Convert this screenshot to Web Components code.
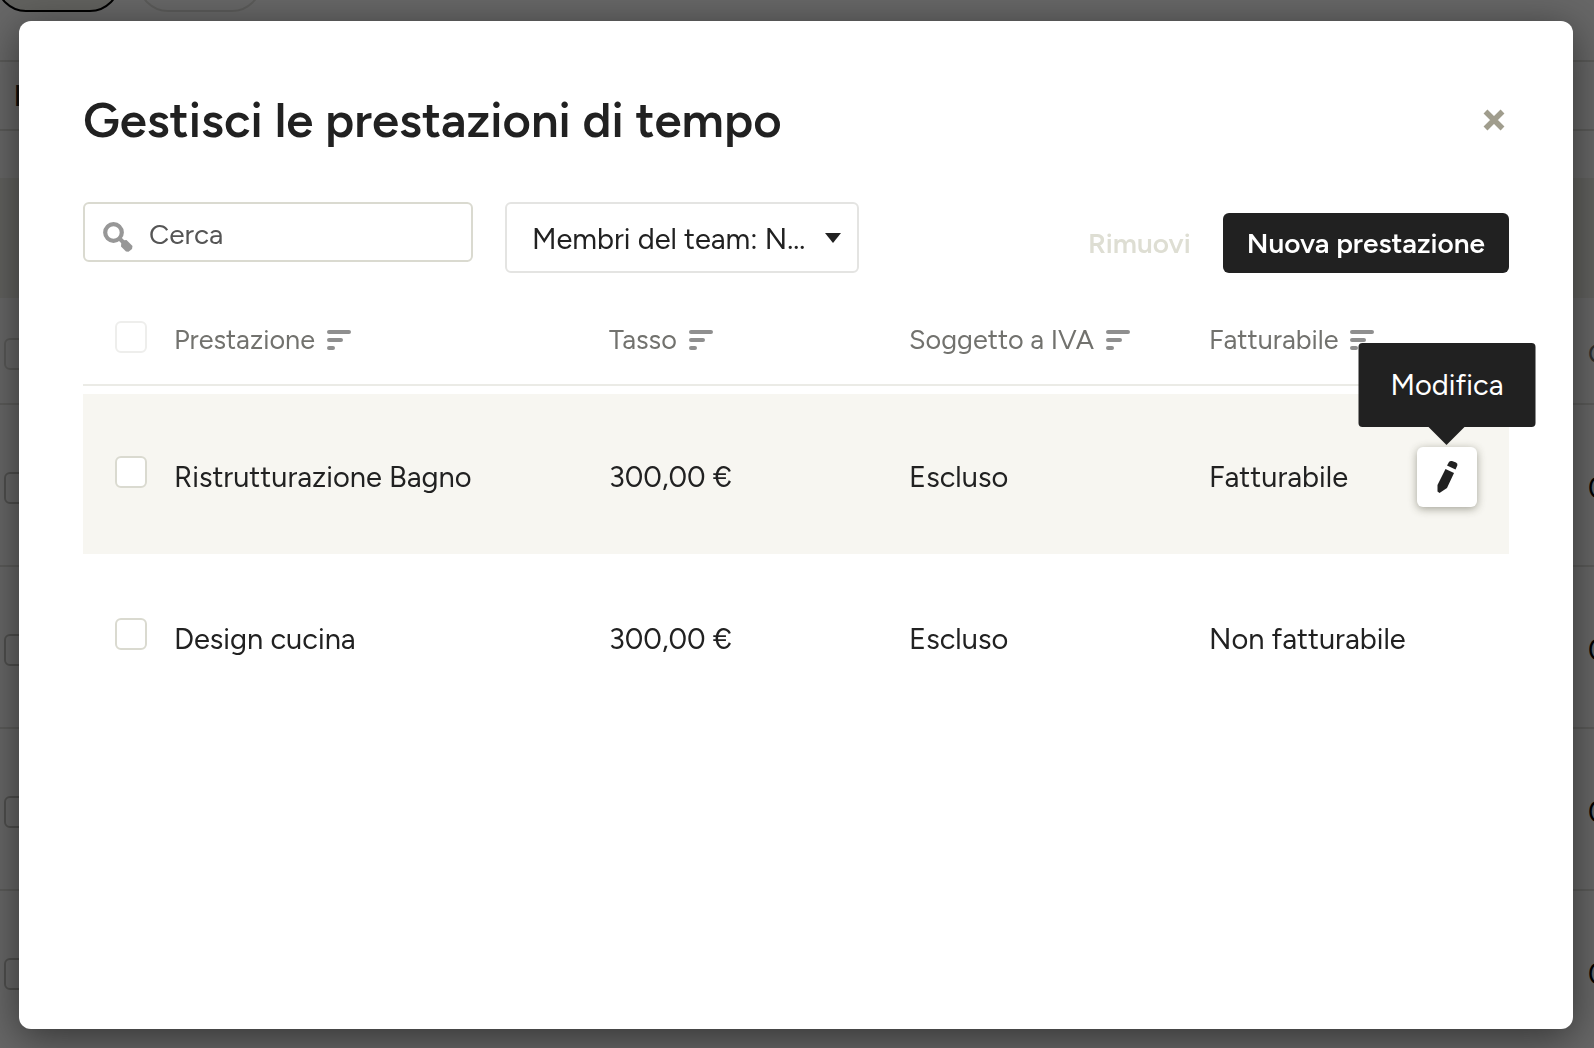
<!DOCTYPE html>
<html lang="it">
<head>
<meta charset="utf-8">
<meta name="viewport" content="width=device-width, initial-scale=1">
<title>Gestisci le prestazioni di tempo</title>
<style>
  body {
    margin: 0;
    height: 100vh;
    overflow: hidden;
    font-family: Figtree, Lato, "Open Sans", sans-serif;
    font-size: 29px;
    line-height: 36px;
    color: #212121;
    --ink: #212121;
    --muted: #72726e;
    --border: #dadad0;
    --border-light: #ebebe6;
    --sand: #f7f6f1;
    --control-size: 28px;
  }
</style>
</head>
<body>

<page-behind></page-behind>

<modal-dialog heading="Gestisci le prestazioni di tempo">
  <search-field slot="filters" label="Cerca"></search-field>
  <filter-select slot="filters" label="Membri del team: N..."></filter-select>
  <action-button slot="actions" variant="text" disabled>Rimuovi</action-button>
  <action-button slot="actions">Nuova prestazione</action-button>
  <service-table></service-table>
</modal-dialog>

<script>
// Page that stays visible around the edges of the modal
class PageBehind extends HTMLElement {
  constructor() {
    super();
    this.attachShadow({ mode: 'open' });
    const row = `
      <div class="row">
        <input type="checkbox" aria-label="Seleziona riga" tabindex="-1">
        <span>0</span>
      </div>`;

    this.shadowRoot.innerHTML = `
      <style>
        :host {
          display: block;
          height: 100%;
          overflow: hidden;
          background: #fff;
        }
        .pills {
          display: flex;
          gap: 18px;
          height: 12px;
          margin-left: -4px;
          align-items: flex-end;
          overflow: hidden;
        }
        .pill {
          flex: none;
          box-sizing: border-box;
          width: 124px;
          height: 60px;
          border: 2px solid #e2e2de;
          border-radius: 30px;
        }
        .pill.active {
          border-color: #000;
          background: #f1f1ea;
        }
        .bar {
          box-sizing: border-box;
          height: 71px;
          margin-top: 48px;
          padding: 16px 14px;
          border: solid #e0e0dc;
          border-width: 2px 0;
          font-weight: 700;
        }
        .band {
          height: 120px;
          margin-top: 47px;
          background: #f1f1ea;
        }
        .row {
          box-sizing: border-box;
          display: flex;
          align-items: center;
          justify-content: space-between;
          height: 162px;
          padding: 6px 0 0 4px;
          border-bottom: 2px solid #e2e2de;
          color: #000;
        }
        .row.head {
          height: 107px;
          font-size: 27px;
          color: #72726e;
        }
        .row span {
          flex: none;
          width: 6px;
        }
        input {
          appearance: none;
          box-sizing: border-box;
          width: 32px;
          height: 32px;
          margin: 0;
          border: 2px solid #c4c4c0;
          border-radius: 6px;
        }
        .head input {
          border-color: #dadad6;
        }
      </style>
      <div class="pills">
        <div class="pill active"></div>
        <div class="pill"></div>
      </div>
      <div class="bar">I</div>
      <div class="band"></div>
      <div class="row head">
        <input type="checkbox" aria-label="Seleziona tutto" tabindex="-1">
        <span>O</span>
      </div>
      ${row.repeat(4)}
    `;
  }
}

// Overlay with the white dialog box
class ModalDialog extends HTMLElement {
  constructor() {
    super();
    this.attachShadow({ mode: 'open' });
    this.shadowRoot.innerHTML = `
      <style>
        :host {
          position: fixed;
          inset: 0;
          display: flex;
          box-sizing: border-box;
          padding: 21px 21px 19px 19px;
          background: rgba(0, 0, 0, .6);
        }
        .dialog {
          flex: 1;
          min-width: 0;
          box-sizing: border-box;
          padding: 64px;
          border-radius: 12px;
          background: #fff;
          box-shadow: 0 8px 40px rgba(0, 0, 0, .5);
        }
        header {
          display: flex;
          align-items: center;
          justify-content: space-between;
          height: 69px;
          margin-bottom: 48px;
        }
        h1 {
          margin: 0;
          font-size: 49px;
          line-height: 64px;
          font-weight: 600;
        }
        .close {
          display: flex;
          padding: 4px;
          border: 0;
          background: none;
          color: #a09d8d;
        }
        .toolbar {
          display: flex;
          justify-content: space-between;
          margin-bottom: 16px;
        }
        .filters {
          display: flex;
          align-items: flex-start;
          gap: 32px;
        }
        .actions {
          display: flex;
          align-items: flex-end;
          gap: 8px;
        }
      </style>
      <section class="dialog" role="dialog" aria-modal="true" aria-labelledby="title">
        <header>
          <h1 id="title"></h1>
          <button class="close" type="button" aria-label="Chiudi">
            <svg width="22" height="22" viewBox="0 0 22 22" stroke="currentColor" stroke-width="5.500">
              <path d="M2.500 2.500l17 17M19.500 2.500l-17 17"/>
            </svg>
          </button>
        </header>
        <div class="toolbar">
          <div class="filters"><slot name="filters"></slot></div>
          <div class="actions"><slot name="actions"></slot></div>
        </div>
        <slot></slot>
      </section>
    `;
  }

  connectedCallback() {
    this.shadowRoot.querySelector('h1').textContent = this.getAttribute('heading');
  }
}

class SearchField extends HTMLElement {
  constructor() {
    super();
    this.attachShadow({ mode: 'open' });
    this.shadowRoot.innerHTML = `
      <style>
        :host {
          display: block;
          width: 390px;
        }
        label {
          box-sizing: border-box;
          display: flex;
          align-items: center;
          gap: 16px;
          height: 60px;
          padding: 10px 18px 0;
          border: 2px solid var(--border);
          border-radius: 6px;
        }
        svg {
          flex: none;
          color: #979797;
        }
        input {
          flex: 1;
          min-width: 0;
          height: 40px;
          margin-bottom: 6px;
          padding: 0;
          border: 0;
          outline: 0;
          background: none;
          font: inherit;
          font-size: var(--control-size);
          color: inherit;
        }
        input::placeholder {
          color: #555;
          opacity: 1;
        }
      </style>
      <label>
        <svg width="30" height="30" viewBox="0 0 30 30" aria-hidden="true">
          <circle cx="10.500" cy="10.500" r="8.300" fill="none" stroke="currentColor" stroke-width="4.200"/>
          <path d="M16 16l4 4" stroke="currentColor" stroke-width="4"/>
          <path d="M18.500 18.500l5-.5 6 6-.5 3-3.500 2.800-2.500-.3-5-5z" fill="currentColor"/>
        </svg>
        <input type="search">
      </label>
    `;
  }

  connectedCallback() {
    const input = this.shadowRoot.querySelector('input');
    input.placeholder = this.getAttribute('label');
    input.setAttribute('aria-label', this.getAttribute('label'));
  }
}

class FilterSelect extends HTMLElement {
  constructor() {
    super();
    this.attachShadow({ mode: 'open' });
    this.shadowRoot.innerHTML = `
      <style>
        :host {
          display: grid;
          align-items: center;
          width: 354px;
        }
        select, svg {
          grid-area: 1 / 1;
        }
        select {
          appearance: none;
          box-sizing: border-box;
          width: 100%;
          height: 71px;
          padding: 2px 40px 0 25px;
          border: 2px solid #e4e4e2;
          border-radius: 6px;
          background: #fff;
          font: inherit;
          color: inherit;
        }
        svg {
          justify-self: end;
          margin-right: 18px;
          pointer-events: none;
        }
      </style>
      <select aria-label="Membri del team"><option></option></select>
      <svg width="16" height="10" viewBox="0 0 16 10" fill="#212121" aria-hidden="true">
        <path d="M0 0h16L8 10z"/>
      </svg>
    `;
  }

  connectedCallback() {
    this.shadowRoot.querySelector('option').textContent = this.getAttribute('label');
  }
}

class ActionButton extends HTMLElement {
  constructor() {
    super();
    this.attachShadow({ mode: 'open' });
    this.shadowRoot.innerHTML = `
      <style>
        :host {
          display: block;
        }
        button {
          height: 60px;
          padding: 0 24px;
          border: 0;
          border-radius: 6px;
          background: var(--ink);
          color: #fff;
          font: inherit;
          font-size: var(--control-size);
          font-weight: 600;
        }
        :host([variant="text"]) button {
          background: none;
        }
        button:disabled {
          color: #deded3;
        }
      </style>
      <button type="button"><slot></slot></button>
    `;
  }

  connectedCallback() {
    this.shadowRoot.querySelector('button').disabled = this.hasAttribute('disabled');
  }
}

// Pencil button with its tooltip open above it
class EditAction extends HTMLElement {
  constructor() {
    super();
    this.attachShadow({ mode: 'open' });
    this.shadowRoot.innerHTML = `
      <style>
        :host {
          position: relative;
          display: block;
        }
        button {
          display: flex;
          align-items: center;
          justify-content: center;
          width: 60px;
          height: 60px;
          padding: 0;
          border: 0;
          border-radius: 6px;
          background: #fff;
          color: var(--ink);
          box-shadow: 0 2px 8px rgba(60, 60, 40, .45);
        }
        .tooltip {
          position: absolute;
          bottom: calc(100% + 20px);
          left: 50%;
          transform: translateX(-50%);
          box-sizing: border-box;
          padding: 24px 32px;
          border-radius: 4px;
          background: var(--ink);
          color: #fff;
          text-align: center;
        }
        .tooltip::after {
          content: "";
          position: absolute;
          top: 100%;
          left: 50%;
          margin-left: -18px;
          border: 18px solid transparent;
          border-top-color: var(--ink);
          border-bottom: 0;
        }
      </style>
      <button type="button" aria-labelledby="tip">
        <svg width="22" height="34" viewBox="0 0 22 34" fill="currentColor" aria-hidden="true">
          <path d="M11 5.500L13 2q1-1.500 3-1l4 1.500q2 1 1.300 3L19.500 9.500z"/>
          <path d="M9.500 9l8.500 4L11 28l-7.500 5L1.500 31.500V25z"/>
        </svg>
      </button>
      <div class="tooltip" id="tip" role="tooltip"><slot></slot></div>
    `;
  }
}

class ServiceTable extends HTMLElement {
  constructor() {
    super();
    this.attachShadow({ mode: 'open' });

    const columns = ['Prestazione', 'Tasso', 'Soggetto a IVA', 'Fatturabile'];
    const services = [
      { name: 'Ristrutturazione Bagno', rate: '300,00 €', vat: 'Escluso', billable: 'Fatturabile', active: true },
      { name: 'Design cucina', rate: '300,00 €', vat: 'Escluso', billable: 'Non fatturabile' }
    ];

    this.shadowRoot.innerHTML = `
      <style>
        :host {
          display: block;
        }
        table {
          width: 100%;
          table-layout: fixed;
          border-collapse: separate;
          border-spacing: 0;
        }
        .check {
          width: 91px;
        }
        .col {
          width: 300px;
        }
        th, td {
          box-sizing: border-box;
          padding: 6px 0 0;
          text-align: left;
          font-weight: 400;
          white-space: nowrap;
        }
        th {
          height: 97px;
          border-bottom: 2px solid var(--border-light);
          font-size: 27px;
          color: var(--muted);
        }
        td {
          height: 162px;
          border-bottom: 2px solid #fff;
        }
        /* gap between the header line and the first row */
        tbody::before {
          content: "";
          display: block;
          height: 8px;
        }
        .active td {
          background: var(--sand);
          background-clip: padding-box;
        }
        th:first-child, td:first-child {
          padding: 0 0 4px 32px;
        }
        th:first-child {
          padding-bottom: 0;
        }
        .sort {
          display: flex;
          align-items: center;
          gap: 12px;
          padding: 0;
          border: 0;
          background: none;
          font: inherit;
          color: inherit;
        }
        .sort svg {
          flex: none;
        }
        .last {
          display: flex;
          align-items: center;
          justify-content: space-between;
          padding-right: 32px;
        }
        input {
          display: block;
          appearance: none;
          box-sizing: border-box;
          width: 32px;
          height: 32px;
          margin: 0;
          border: 2px solid var(--border);
          border-radius: 6px;
          background: #fff;
        }
        th input {
          border-color: #eeeeec;
        }
      </style>
      <table>
        <colgroup>
          <col class="check"><col><col class="col"><col class="col"><col class="col">
        </colgroup>
        <thead>
          <tr>
            <th><input type="checkbox" aria-label="Seleziona tutte le prestazioni"></th>
            ${columns.map(column => `
              <th scope="col">
                <button class="sort" type="button">${column}
                  <svg width="24" height="20" viewBox="0 0 24 20" stroke="#8f8f8f" stroke-width="4" stroke-linecap="round" aria-hidden="true">
                    <path d="M2 2h20M2 10h12M2 18h4"/>
                  </svg>
                </button>
              </th>`).join('')}
          </tr>
        </thead>
        <tbody>
          ${services.map(service => `
            <tr class="${service.active ? 'active' : ''}">
              <td><input type="checkbox" aria-label="Seleziona ${service.name}"></td>
              <td>${service.name}</td>
              <td>${service.rate}</td>
              <td>${service.vat}</td>
              <td>
                <div class="last">
                  <span>${service.billable}</span>
                  ${service.active ? '<edit-action>Modifica</edit-action>' : ''}
                </div>
              </td>
            </tr>`).join('')}
        </tbody>
      </table>
    `;
  }
}

customElements.define('page-behind', PageBehind);
customElements.define('modal-dialog', ModalDialog);
customElements.define('search-field', SearchField);
customElements.define('filter-select', FilterSelect);
customElements.define('action-button', ActionButton);
customElements.define('edit-action', EditAction);
customElements.define('service-table', ServiceTable);
</script>
</body>
</html>
